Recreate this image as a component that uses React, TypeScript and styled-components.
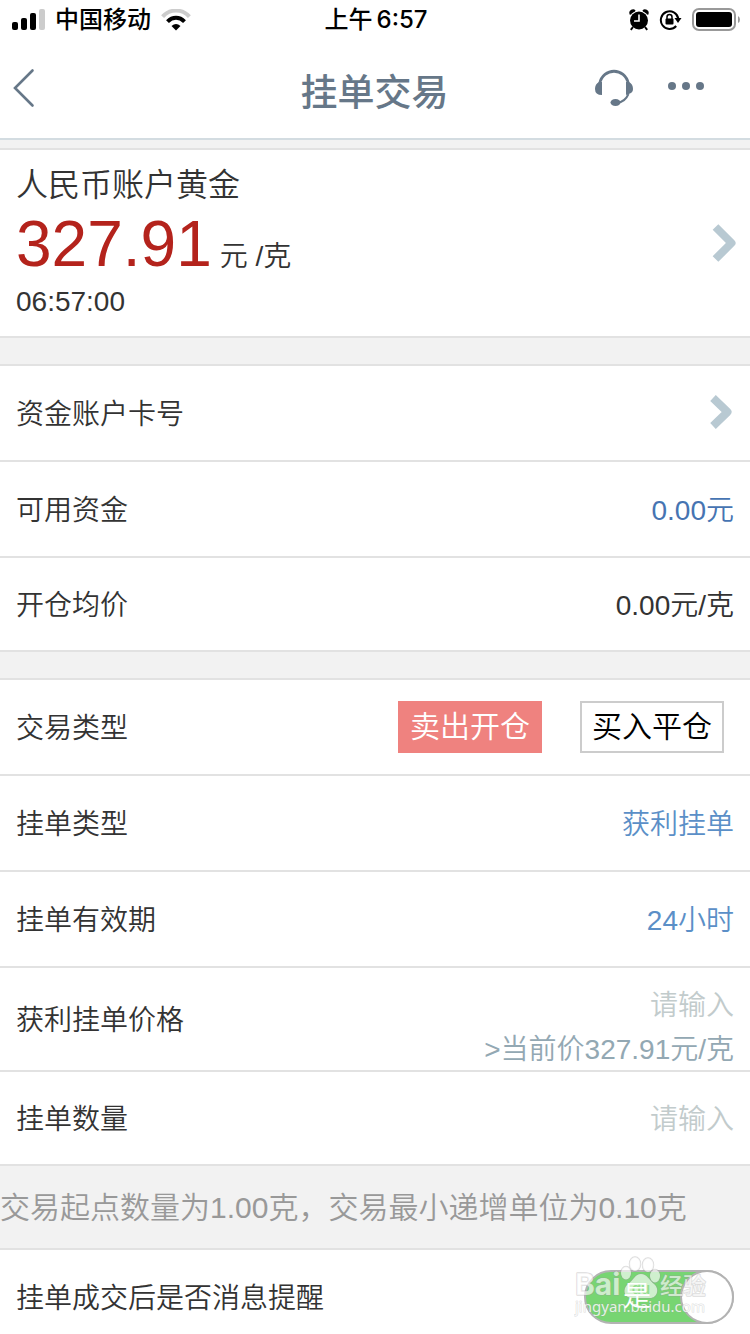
import React, { useState } from 'react';
import styled, { createGlobalStyle } from 'styled-components';

const GlobalStyle = createGlobalStyle`
  * { box-sizing: border-box; }
  body {
    margin: 0;
    background: #ffffff;
    color: #333333;
    font-family: "Liberation Sans", "Noto Sans CJK SC", sans-serif;
    font-size: 28px;
    font-weight: 350;
    line-height: 40px;
  }
  button, input, select { font: inherit; color: inherit; margin: 0; }
`;

const Page = styled.div`
  display: flex;
  flex-direction: column;
  min-height: 100vh;
  overflow-x: hidden;
`;

const StatusBar = styled.div`
  display: grid;
  grid-template-columns: 1fr auto 1fr;
  align-items: center;
  height: 40px;
  padding: 0 10px 0 12px;
  color: #000000;
  font-family: Inter, "Noto Sans CJK SC", sans-serif;
  font-size: 24px;
  font-weight: 500;
`;

const StatusGroup = styled.div<{ $end?: boolean }>`
  display: flex;
  align-items: center;
  justify-content: ${(p) => (p.$end ? 'flex-end' : 'flex-start')};
  gap: 10px;
`;

const Clock = styled.div`
  display: flex;
  gap: 4px;
`;

const Header = styled.header`
  display: grid;
  grid-template-columns: 1fr auto 1fr;
  align-items: center;
  height: 100px;
  padding: 0 45px 2px 12px;
  border-bottom: 2px solid #d3dce1;
  color: #667788;
`;

const Title = styled.h1`
  margin: 0;
  padding: 12px 0 0 32px;
  font-size: 37px;
  font-weight: 500;
  line-height: 56px;
`;

const HeaderActions = styled.div`
  display: flex;
  align-items: center;
  justify-content: flex-end;
  gap: 33px;
`;

const IconButton = styled.button`
  display: flex;
  justify-self: start;
  padding: 0;
  border: 0;
  background: none;
`;

const Gap = styled.div<{ $small?: boolean }>`
  height: ${(p) => (p.$small ? 8 : 26)}px;
  background: #f2f2f2;
`;

const Panel = styled.section`
  border-top: 2px solid #e2e2e2;
  border-bottom: 2px solid #e2e2e2;
`;

const Quote = styled.button`
  display: flex;
  align-items: center;
  justify-content: space-between;
  width: 100%;
  padding: 14px 14px 14px 16px;
  border: 0;
  background: none;
  text-align: left;
`;

const QuoteBody = styled.span`
  display: flex;
  flex-direction: column;
`;

const QuoteName = styled.span`
  font-size: 32px;
  line-height: 42px;
`;

const QuotePrice = styled.span`
  display: flex;
  align-items: baseline;
  gap: 8px;
`;

const Price = styled.span`
  color: #b4231c;
  font-size: 64px;
  line-height: 76px;
`;

const Row = styled.div<{ $height?: number }>`
  display: flex;
  align-items: center;
  justify-content: space-between;
  min-height: ${(p) => p.$height ?? 96}px;
  padding: 4px 16px 0;

  & + & { border-top: 2px solid #e2e2e2; }
`;

const RowButton = styled.button`
  display: flex;
  align-items: center;
  justify-content: space-between;
  width: 100%;
  min-height: 96px;
  padding: 4px 16px 0;
  border: 0;
  border-bottom: 2px solid #e2e2e2;
  background: none;
`;

const Value = styled.span<{ $blue?: boolean }>`
  color: ${(p) => (p.$blue ? '#4674b2' : '#333333')};
`;

const Picker = styled.select`
  padding: 0;
  border: 0;
  background: none;
  color: #5b8fc7;
  appearance: none;
  text-align-last: right;
`;

const Choices = styled.div`
  display: flex;
  gap: 38px;
  padding: 0 10px 4px 0;
`;

const Choice = styled.button<{ $active: boolean }>`
  width: 144px;
  height: 52px;
  padding: 0;
  border: 2px solid ${(p) => (p.$active ? '#ef827f' : '#cccccc')};
  background: ${(p) => (p.$active ? '#ef827f' : '#ffffff')};
  color: ${(p) => (p.$active ? '#ffffff' : '#000000')};
  font-size: 30px;
`;

const Field = styled.div`
  display: flex;
  flex-direction: column;
  align-items: flex-end;
  gap: 4px;
  padding-top: 14px;
`;

const Entry = styled.input`
  width: 240px;
  height: 40px;
  padding: 0;
  border: 0;
  outline: 0;
  background: none;
  text-align: right;

  &::placeholder { color: #c2cbcc; opacity: 1; }
`;

const FieldNote = styled.span`
  color: #93a8b3;
`;

const Hint = styled.p`
  margin: 0;
  padding: 22px 0 20px;
  background: #f2f2f2;
  color: #999999;
  font-size: 30px;
`;

const LastPanel = styled.section`
  flex: 1;
  padding-top: 10px;
  border-top: 2px solid #e2e2e2;
`;

const SwitchBox = styled.span`
  position: relative;
  display: flex;
  margin-bottom: 4px;
`;

const Switch = styled.input`
  display: flex;
  justify-content: flex-end;
  width: 150px;
  height: 54px;
  margin: 0;
  border: 2px solid #b3b3b3;
  border-radius: 27px;
  background: #77d572;
  appearance: none;

  &:not(:checked) { justify-content: flex-start; background: #dddddd; }

  &::after {
    content: "";
    width: 50px;
    height: 50px;
    border-radius: 25px;
    background: #ffffff;
    box-shadow: 0 0 0 2px #b3b3b3;
  }
`;

const SwitchText = styled.span`
  position: absolute;
  top: 7px;
  left: 39px;
  color: #ffffff;
  pointer-events: none;
`;

const Watermark = styled.svg`
  position: absolute;
  right: 22px;
  bottom: 0;
  pointer-events: none;
`;

const SignalIcon = () => (
  <svg width="33" height="22" viewBox="0 0 33 22" aria-hidden="true">
    <rect x="0" y="13" width="6" height="8" rx="2" />
    <rect x="9" y="9" width="6" height="12" rx="2" />
    <rect x="18" y="4" width="6" height="17" rx="2" />
    <rect x="27" y="0" width="6" height="21" rx="2" fill="#cccccc" />
  </svg>
);

const WifiIcon = () => (
  <svg width="30" height="22" viewBox="0 0 30 22" fill="none" aria-hidden="true">
    <path d="M1.6 7.6C9 -.4 21 -.4 28.4 7.6" stroke="#cccccc" strokeWidth="4" />
    <path d="M6.5 12.6C11.5 7.6 18.5 7.6 23.5 12.6" stroke="#000" strokeWidth="4" />
    <path d="M15 21.5L10.5 17Q15 13 19.5 17Z" fill="#000" />
  </svg>
);

const AlarmIcon = () => (
  <svg width="20" height="22" viewBox="0 0 20 22" aria-hidden="true">
    <circle cx="10" cy="11.5" r="9" />
    <path d="M1.5 5.5Q.3 2.5 2.5 1.5T6 2.2M18.5 5.5Q19.7 2.5 17.5 1.5T14 2.2" stroke="#000" strokeWidth="1.6" />
    <path d="M4 18L1.8 20.8M16 18L18.2 20.8" stroke="#000" strokeWidth="2" />
    <path d="M10 5.5V12H5" fill="none" stroke="#fff" strokeWidth="1.6" />
  </svg>
);

const LockIcon = () => (
  <svg width="23" height="22" viewBox="0 0 23 22" fill="none" aria-hidden="true">
    <path d="M19.3 9.5A8.8 8.8 0 1 0 17.2 17" stroke="#000" strokeWidth="2" />
    <path d="M15.5 9H22.5L19 14Z" fill="#000" />
    <rect x="6.5" y="9.5" width="8" height="6" rx="1" fill="#000" />
    <path d="M8 10V8Q8 5.6 10.5 5.6T13 8V10" stroke="#000" strokeWidth="1.5" />
  </svg>
);

const BatteryIcon = () => (
  <svg width="48" height="24" viewBox="0 0 48 24" aria-hidden="true">
    <rect x="1" y="1" width="42" height="21" rx="6" fill="none" stroke="#999999" strokeWidth="2" />
    <rect x="4" y="4" width="36" height="15" rx="3" />
    <path d="M46 8Q48 9 48 11.5T46 15Z" fill="#999999" />
  </svg>
);

const BackIcon = () => (
  <svg width="24" height="40" viewBox="0 0 24 40" fill="none" stroke="#667788" strokeWidth="2.6" strokeLinecap="round" aria-hidden="true">
    <path d="M20.5 2.5L3 20L20.5 37.5" />
  </svg>
);

const HeadsetIcon = () => (
  <svg width="40" height="38" viewBox="0 0 40 38" aria-hidden="true">
    <path d="M5.5 15C9 -2 31 -2 34.5 15" fill="none" stroke="#667788" strokeWidth="2.8" />
    <path d="M8 13V26Q1 26 1 20Q1 15 5 13ZM32 13V26L36 24.5Q39 23 39 20Q39 15 35 13Z" fill="#667788" />
    <path d="M34.5 25Q31 33 23 34" fill="none" stroke="#667788" strokeWidth="2" />
    <ellipse cx="21.5" cy="33.5" rx="5" ry="3.5" fill="#667788" />
  </svg>
);

const MoreIcon = () => (
  <svg width="38" height="14" viewBox="0 0 38 14" fill="#667788" aria-hidden="true">
    <circle cx="5" cy="5" r="4" />
    <circle cx="19" cy="5" r="4" />
    <circle cx="33" cy="5" r="4" />
  </svg>
);

const ChevronIcon = ({ large = false }: { large?: boolean }) => (
  <svg width="24" height="40" viewBox="0 0 24 40" fill="none" stroke="#b8c9d2" strokeLinejoin="round" aria-hidden="true">
    {large
      ? <path d="M3.5 4L19.5 20L3.5 36" strokeWidth="8" />
      : <path d="M3 3L17.5 17L3 31" strokeWidth="8" />}
  </svg>
);

const WatermarkMark = () => (
  <Watermark width="138" height="72" viewBox="0 0 138 72" aria-hidden="true">
    <g fill="#ffffff" fillOpacity="0.65" stroke="#999999" strokeOpacity="0.35" strokeWidth="1.5" strokeLinejoin="round" paintOrder="stroke">
      <text x="1" y="43" fontFamily="Inter, sans-serif" fontWeight="700" fontSize="30">Bai</text>
      <text x="86" y="42" fontFamily="Noto Sans CJK SC, sans-serif" fontWeight="500" fontSize="23">经验</text>
      <ellipse cx="52" cy="21" rx="5" ry="6.5" />
      <ellipse cx="61" cy="12" rx="5.5" ry="7" />
      <ellipse cx="74" cy="13" rx="5.5" ry="7" />
      <ellipse cx="81" cy="24" rx="5" ry="6.5" />
      <path d="M67 22C73 22 75 28 80 32C86 37 83 46 76 46H58C50 46 48 37 54 32C60 28 61 22 67 22Z" />
    </g>
    <text x="1" y="60" fill="#ffffff" fillOpacity="0.8" stroke="#999999" strokeOpacity="0.35" strokeWidth="1" paintOrder="stroke" fontFamily="Noto Sans, sans-serif" fontWeight="400" fontSize="15">jingyan.baidu.com</text>
    <text x="67" y="42" textAnchor="middle" fill="#77d572" fillOpacity="0.7" fontFamily="Inter, sans-serif" fontWeight="600" fontSize="15">du</text>
  </Watermark>
);

const sides = ['卖出开仓', '买入平仓'];

export default function App() {
  const [side, setSide] = useState(sides[0]);

  return (
    <>
      <GlobalStyle />
      <Page>
        <StatusBar>
          <StatusGroup>
            <SignalIcon />
            <span>中国移动</span>
            <WifiIcon />
          </StatusGroup>
          <Clock>
            <span>上午</span>
            <span>6:57</span>
          </Clock>
          <StatusGroup $end>
            <AlarmIcon />
            <LockIcon />
            <BatteryIcon />
          </StatusGroup>
        </StatusBar>
        <Header>
          <IconButton type="button" aria-label="返回"><BackIcon /></IconButton>
          <Title>挂单交易</Title>
          <HeaderActions>
            <IconButton type="button" aria-label="客服"><HeadsetIcon /></IconButton>
            <IconButton type="button" aria-label="更多"><MoreIcon /></IconButton>
          </HeaderActions>
        </Header>
        <Gap $small />
        <Panel>
          <Quote type="button">
            <QuoteBody>
              <QuoteName>人民币账户黄金</QuoteName>
              <QuotePrice><Price>327.91</Price><span>元 /克</span></QuotePrice>
              <span>06:57:00</span>
            </QuoteBody>
            <ChevronIcon large />
          </Quote>
        </Panel>
        <Gap />
        <Panel>
          <RowButton type="button">
            <span>资金账户卡号</span>
            <ChevronIcon />
          </RowButton>
          <Row $height={94}>
            <span>可用资金</span>
            <Value $blue>0.00元</Value>
          </Row>
          <Row $height={94}>
            <span>开仓均价</span>
            <Value>0.00元/克</Value>
          </Row>
        </Panel>
        <Gap />
        <Panel>
          <Row $height={94}>
            <span>交易类型</span>
            <Choices>
              {sides.map((name) => (
                <Choice key={name} type="button" $active={side === name} aria-pressed={side === name} onClick={() => setSide(name)}>
                  {name}
                </Choice>
              ))}
            </Choices>
          </Row>
          <Row>
            <label htmlFor="kind">挂单类型</label>
            <Picker id="kind"><option>获利挂单</option></Picker>
          </Row>
          <Row>
            <label htmlFor="term">挂单有效期</label>
            <Picker id="term"><option>24小时</option></Picker>
          </Row>
          <Row $height={104}>
            <label htmlFor="price">获利挂单价格</label>
            <Field>
              <Entry id="price" placeholder="请输入" inputMode="decimal" />
              <FieldNote>&gt;当前价327.91元/克</FieldNote>
            </Field>
          </Row>
          <Row $height={94}>
            <label htmlFor="amount">挂单数量</label>
            <Entry id="amount" placeholder="请输入" inputMode="decimal" />
          </Row>
        </Panel>
        <Hint>交易起点数量为1.00克，交易最小递增单位为0.10克</Hint>
        <LastPanel>
          <Row $height={74}>
            <label htmlFor="notify">挂单成交后是否消息提醒</label>
            <SwitchBox>
              <Switch id="notify" type="checkbox" role="switch" defaultChecked />
              <WatermarkMark />
              <SwitchText>是</SwitchText>
            </SwitchBox>
          </Row>
        </LastPanel>
      </Page>
    </>
  );
}
